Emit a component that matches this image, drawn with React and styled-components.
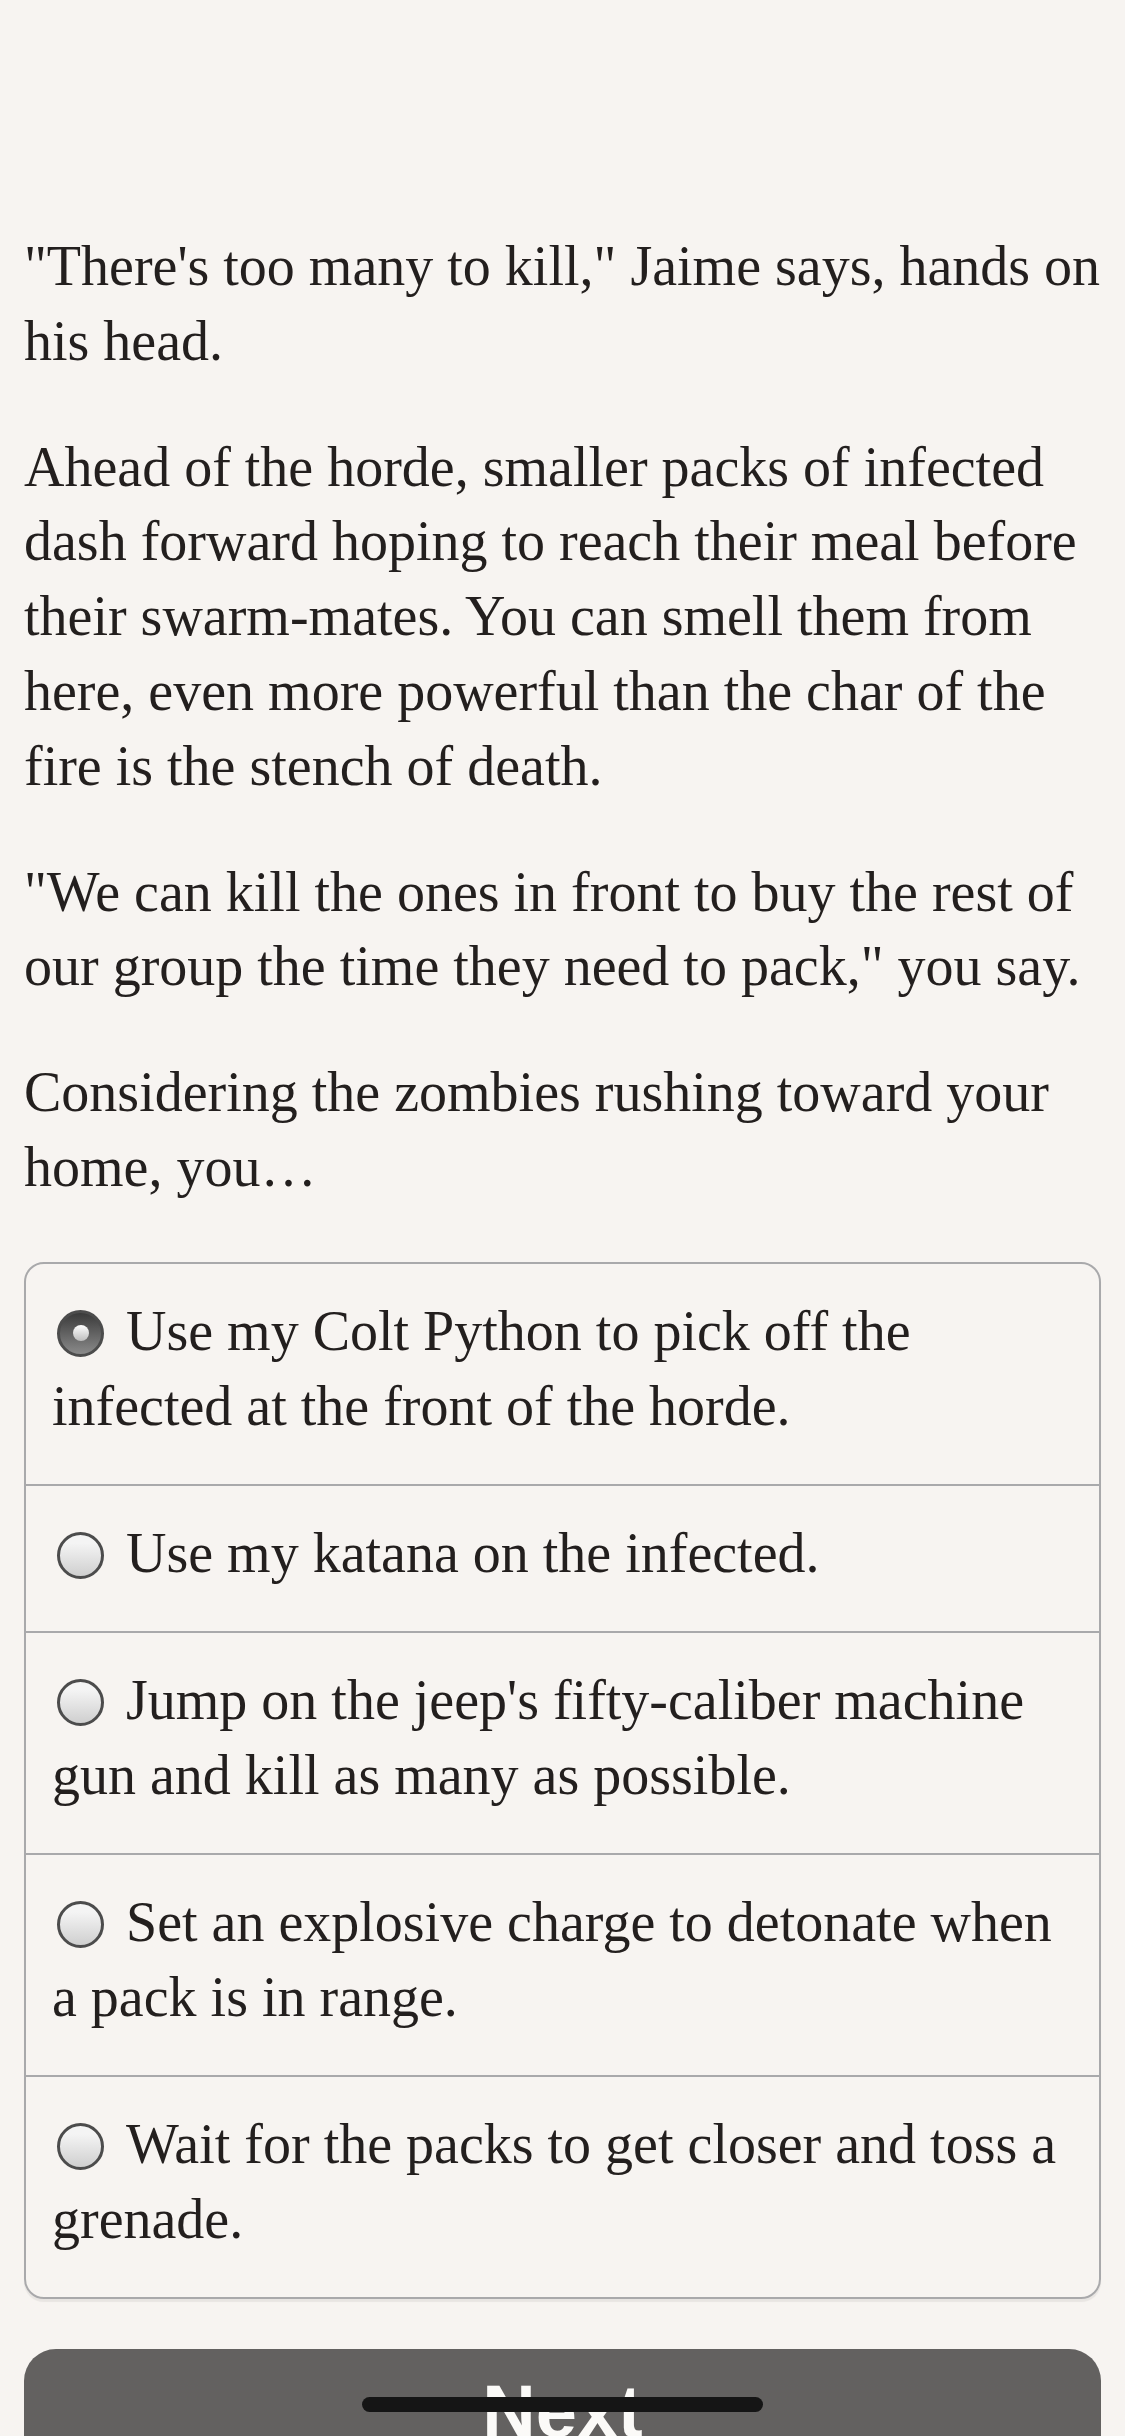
import React, { useState } from 'react'
import styled, { createGlobalStyle } from 'styled-components'

const GlobalStyle = createGlobalStyle`
  html, body {
    margin: 0;
    padding: 0;
    background: #f7f4f1;
  }
  body {
    font-family: "Liberation Serif", "Times New Roman", serif;
    color: #231f1e;
  }
`

const Page = styled.div`
  min-height: 2436px;
  box-sizing: border-box;
  padding: 229px 24px 0;
  overflow: hidden;
`

const Story = styled.div`
  p {
    margin: 0 0 51px;
    font-size: 56px;
    line-height: 74.8px;
  }
  p:last-child {
    margin-bottom: 0;
  }
`

const ChoiceBox = styled.div`
  margin-top: 57px;
  border: 2px solid #a9a9ab;
  border-radius: 20px;
  overflow: hidden;
  box-shadow: 0 3px 1px rgba(0, 0, 0, 0.06);
`

const Option = styled.label`
  display: block;
  padding: 30px 26px 40px;
  font-size: 56px;
  line-height: 75px;
  cursor: pointer;
  & + & {
    border-top: 2px solid #a9a9ab;
  }
`

const Radio = styled.span`
  display: inline-block;
  position: relative;
  box-sizing: border-box;
  width: 47px;
  height: 47px;
  margin: 0 22px 0 5px;
  vertical-align: -7px;
  border-radius: 50%;
  border: 3px solid #4c4c4c;
  background: ${p => p.$checked
    ? 'linear-gradient(#3a3a3a, #8a8a8a)'
    : 'linear-gradient(#f4f4f4 20%, #cfcfcf)'};

  &::after {
    content: '';
    display: ${p => (p.$checked ? 'block' : 'none')};
    position: absolute;
    left: 50%;
    top: 50%;
    width: 16px;
    height: 16px;
    margin: -8px 0 0 -8px;
    border-radius: 50%;
    background: linear-gradient(#ffffff, #bdbdbd);
  }
`

const NextButton = styled.button`
  display: flex;
  justify-content: center;
  align-items: flex-start;
  width: 100%;
  height: 150px;
  margin-top: 50px;
  padding: 26px 0 0;
  border: none;
  border-radius: 32px;
  background: #636160;
  color: #fbfaf8;
  font-family: "Liberation Sans", Arial, sans-serif;
  font-weight: 700;
  font-size: 74px;
  line-height: 74px;
`

const HomeBar = styled.div`
  position: fixed;
  left: 362px;
  bottom: 24px;
  width: 401px;
  height: 15px;
  border-radius: 8px;
  background: #151515;
`

const choices = [
  'Use my Colt Python to pick off the infected at the front of the horde.',
  'Use my katana on the infected.',
  "Jump on the jeep's fifty-caliber machine gun and kill as many as possible.",
  'Set an explosive charge to detonate when a pack is in range.',
  'Wait for the packs to get closer and toss a grenade.',
]

export default function App() {
  const [picked, setPicked] = useState(0)

  return (
    <Page>
      <GlobalStyle />
      <Story>
        <p>"There's too many to kill," Jaime says, hands on his head.</p>
        <p>
          Ahead of the horde, smaller packs of infected dash forward hoping to reach
          their meal before their swarm-mates. You can smell them from here, even more
          powerful than the char of the fire is the stench of death.
        </p>
        <p>"We can kill the ones in front to buy the rest of our group the time they need to pack," you say.</p>
        <p>Considering the zombies rushing toward your home, you…</p>
      </Story>

      <ChoiceBox>
        {choices.map((text, i) => (
          <Option key={i} onClick={() => setPicked(i)}>
            <Radio $checked={picked === i} />
            {text}
          </Option>
        ))}
      </ChoiceBox>

      <NextButton>Next</NextButton>
      <HomeBar />
    </Page>
  )
}
